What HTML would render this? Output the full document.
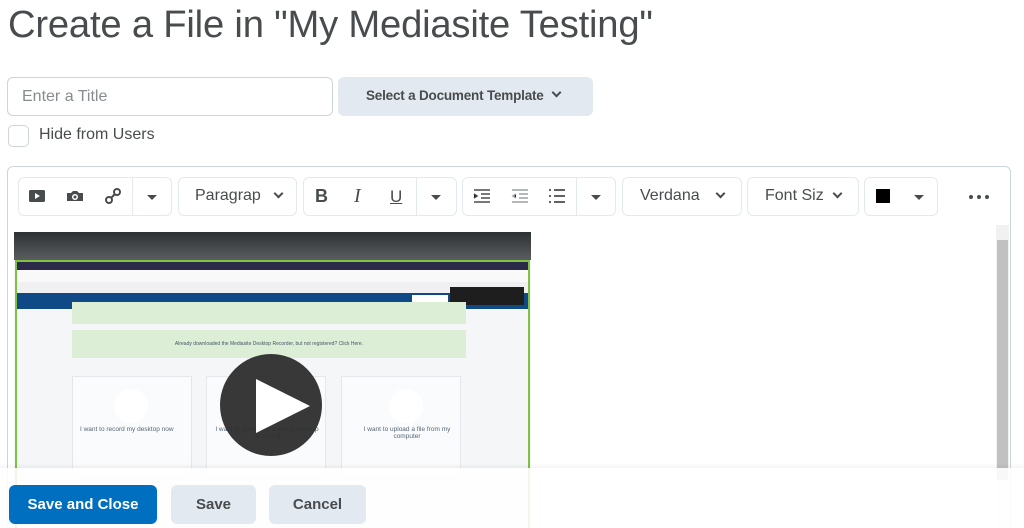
<!DOCTYPE html>
<html><head><style>
*{box-sizing:border-box;margin:0;padding:0}
html,body{width:1024px;height:528px;overflow:hidden}
body{background:#fff;font-family:"Liberation Sans",sans-serif;color:#494c4e;position:relative}
.abs{position:absolute}
h1{position:absolute;left:8px;top:3px;font-size:38.2px;font-weight:400;color:#494c4e;letter-spacing:-0.2px}
.inp{left:7px;top:77px;width:326px;height:39px;border:1px solid #cdd5dc;border-radius:6px;font-size:16px;color:#868c8f;padding:10px 14px}
.tpl{left:338px;top:77px;width:255px;height:39px;background:#e3e9f1;border-radius:6px;font-size:13.5px;font-weight:700;color:#494c4e;padding:11px 0 0 28px;letter-spacing:-0.2px}
.cb{left:8px;top:125px;width:21px;height:22px;border:1px solid #cdd5dc;border-radius:5px}
.lbl{left:39px;top:126px;font-size:16px}
.ed{left:7px;top:166px;width:1004px;height:380px;border:1px solid #cdd5dc;border-radius:6px}
.g{position:absolute;top:177px;height:39px;border:1px solid #e3e9f1;border-radius:6px}
.t{position:absolute;top:187px;font-size:16px;color:#494c4e}
.dv{position:absolute;top:178px;width:1px;height:37px;background:#e3e9f1}
.car{position:absolute;width:0;height:0;border-left:5px solid transparent;border-right:5px solid transparent;border-top:5px solid #494c4e}
.chev{position:absolute;width:7px;height:7px;border-right:2px solid #494c4e;border-bottom:2px solid #494c4e;transform:rotate(45deg)}
.vid{left:14px;top:232px;width:517px;height:296px;background:#f4f6f8;overflow:hidden}
.btn{position:absolute;top:485px;height:39px;border-radius:6px;font-size:15px;font-weight:700;text-align:center;line-height:39px}
</style></head><body>
<h1>Create a File in "My Mediasite Testing"</h1>
<div class="abs inp">Enter a Title</div>
<div class="abs tpl">Select a Document Template</div>
<div class="chev" style="left:553px;top:89px"></div>
<div class="abs cb"></div>
<div class="abs lbl">Hide from Users</div>
<div class="abs ed"></div>

<div class="g" style="left:18px;width:154px"></div>
<div class="dv" style="left:132px"></div>
<svg class="abs" style="left:28px;top:188px" width="18" height="16"><rect x="1" y="2" width="16" height="12" rx="1.5" fill="#494c4e"/><path d="M7 5 L12 8 L7 11Z" fill="#fff"/></svg>
<svg class="abs" style="left:66px;top:188px" width="18" height="16"><path d="M1 5 h4 l2-2 h4 l2 2 h4 v8 h-16z" fill="#494c4e"/><circle cx="9" cy="9" r="3" fill="#fff"/><circle cx="9" cy="9" r="1.5" fill="#494c4e"/></svg>
<svg class="abs" style="left:104px;top:187px" width="18" height="18"><circle cx="5" cy="13" r="3" fill="none" stroke="#494c4e" stroke-width="2"/><circle cx="13" cy="5" r="3" fill="none" stroke="#494c4e" stroke-width="2"/><path d="M7 11 L11 7" stroke="#494c4e" stroke-width="2"/></svg>
<div class="car" style="left:147px;top:195px"></div>

<div class="g" style="left:178px;width:119px"></div>
<div class="t" style="left:195px">Paragrap</div>
<div class="chev" style="left:275px;top:190px"></div>

<div class="g" style="left:303px;width:154px"></div>
<div class="dv" style="left:416px"></div>
<div class="t" style="left:315px;font-weight:700;font-size:18px;top:186px">B</div>
<div class="t" style="left:354px;font-style:italic;font-family:'Liberation Serif',serif;font-size:20px;top:185px">I</div>
<div class="t" style="left:390px;text-decoration:underline;font-size:17px">U</div>
<div class="car" style="left:431px;top:195px"></div>

<div class="g" style="left:462px;width:154px"></div>
<div class="dv" style="left:576px"></div>
<svg class="abs" style="left:473px;top:188px" width="18" height="16" stroke="#494c4e" stroke-width="1.6"><path d="M1 2h16M8 6h9M8 10h9M1 14h16M1 6l3 2-3 2"/></svg>
<svg class="abs" style="left:511px;top:188px" width="18" height="16" stroke="#9ba0a4" stroke-width="1.6"><path d="M1 2h16M8 6h9M8 10h9M1 14h16M5 6l-3 2 3 2"/></svg>
<svg class="abs" style="left:548px;top:188px" width="18" height="16" stroke="#494c4e" stroke-width="1.8"><path d="M6 2h11M6 8h11M6 14h11M1 2h2M1 8h2M1 14h2"/></svg>
<div class="car" style="left:591px;top:195px"></div>

<div class="g" style="left:622px;width:120px"></div>
<div class="t" style="left:640px">Verdana</div>
<div class="chev" style="left:717px;top:190px"></div>
<div class="g" style="left:747px;width:112px"></div>
<div class="t" style="left:765px">Font Siz</div>
<div class="chev" style="left:834px;top:190px"></div>
<div class="g" style="left:864px;width:74px"></div>
<div class="abs" style="left:876px;top:189px;width:14px;height:14px;background:#000"></div>
<div class="car" style="left:914px;top:195px"></div>
<svg class="abs" style="left:968px;top:194px" width="22" height="6" fill="#494c4e"><circle cx="3" cy="3" r="2"/><circle cx="11" cy="3" r="2"/><circle cx="19" cy="3" r="2"/></svg>

<div class="abs vid">
 <div class="abs" style="left:0;top:0;width:517px;height:28px;background:linear-gradient(#2e3134,#5a5d60)"></div>
 <div class="abs" style="left:1px;top:28px;width:515px;height:280px;border:2px solid #7fc241;background:#f4f6f8"></div>
 <div class="abs" style="left:3px;top:30px;width:511px;height:8px;background:#2b2a48"></div>
 <div class="abs" style="left:3px;top:38px;width:511px;height:12px;background:#f9f9fa"></div>
 <div class="abs" style="left:3px;top:50px;width:511px;height:11px;background:#f0f0f3"></div>
 <div class="abs" style="left:3px;top:61px;width:511px;height:16px;background:#0f4a87"></div>
 <div class="abs" style="left:398px;top:63px;width:36px;height:12px;background:#fff"></div>
 <div class="abs" style="left:436px;top:55px;width:74px;height:18px;background:#1e1e1e"></div>
 <div class="abs" style="left:58px;top:70px;width:394px;height:22px;background:#dcefd6"></div>
 <div class="abs" style="left:58px;top:98px;width:394px;height:28px;background:#dcefd6;font-size:5px;text-align:center;line-height:28px;color:#456">Already downloaded the Mediasite Desktop Recorder, but not registered? Click Here.</div>
 <div class="abs" style="left:58px;top:144px;width:120px;height:100px;background:#fafbfc;border:1px solid #e4e8ec"></div>
 <div class="abs" style="left:192px;top:144px;width:120px;height:100px;background:#fafbfc;border:1px solid #e4e8ec"></div>
 <div class="abs" style="left:327px;top:144px;width:120px;height:100px;background:#fafbfc;border:1px solid #e4e8ec"></div>
 <div class="abs" style="left:100px;top:157px;width:34px;height:34px;border-radius:50%;background:#fff"></div>
 <div class="abs" style="left:375px;top:157px;width:34px;height:34px;border-radius:50%;background:#fff"></div>
 <div class="abs" style="left:66px;top:194px;font-size:6.5px;color:#567">I want to record my desktop now</div>
 <div class="abs" style="left:340px;top:194px;font-size:6.5px;color:#567;width:106px;text-align:center">I want to upload a file from my computer</div>
 <div class="abs" style="left:200px;top:194px;font-size:6.5px;color:#567;width:106px;text-align:center">I want to upload an existing desktop recording</div>
 <div class="abs" style="left:206px;top:122px;width:102px;height:102px;border-radius:50%;background:rgba(45,45,45,0.95)"></div>
 <svg class="abs" style="left:240px;top:145px" width="60" height="58"><path d="M2 2 L56 29 L2 56Z" fill="#fff"/></svg>
</div>
<div class="abs" style="left:996px;top:225px;width:13px;height:303px;background:#f1f1f1"></div>
<div class="abs" style="left:997px;top:240px;width:11px;height:240px;background:#c1c1c1"></div>
<div class="abs" style="left:0;top:468px;width:1024px;height:60px;background:rgba(255,255,255,0.88);box-shadow:0 -2px 4px rgba(0,0,0,0.05)"></div>
<div class="btn" style="left:9px;width:148px;background:#006fbf;color:#fff">Save and Close</div>
<div class="btn" style="left:171px;width:85px;background:#e3e9f1;color:#494c4e">Save</div>
<div class="btn" style="left:269px;width:97px;background:#e3e9f1;color:#494c4e">Cancel</div>
</body></html>
